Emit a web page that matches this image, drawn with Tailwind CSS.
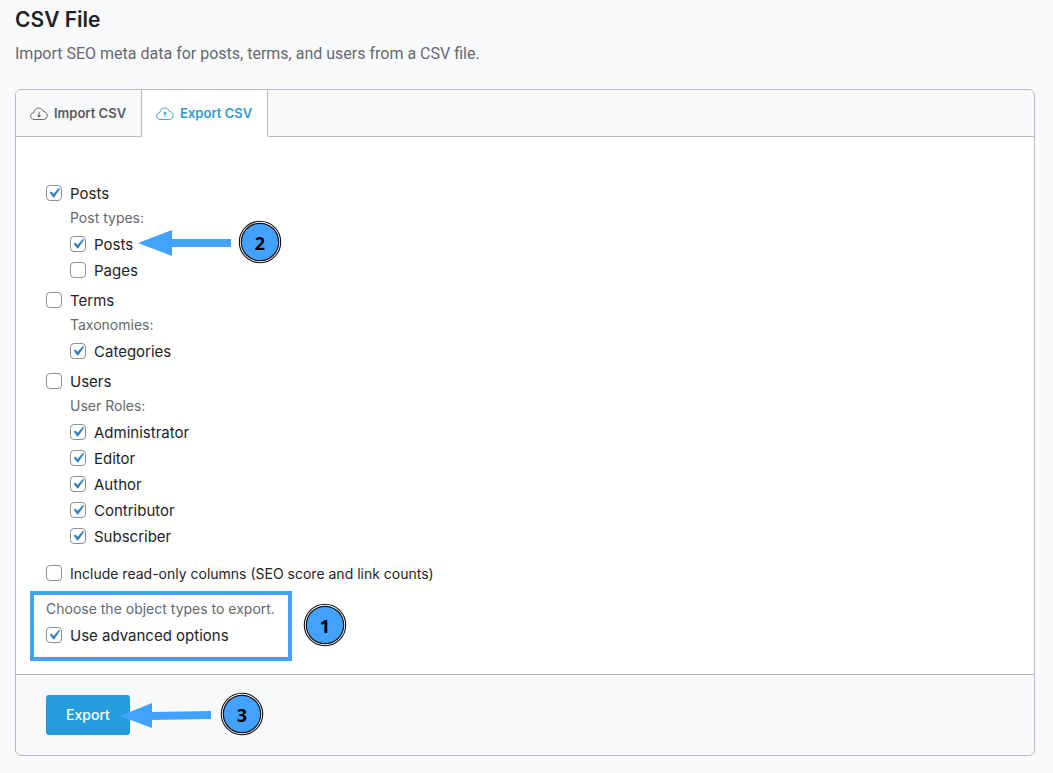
<!DOCTYPE html>
<html lang="en">
<head>
  <meta charset="UTF-8"/>
  <meta name="viewport" content="width=device-width, initial-scale=1.0"/>
  <title>CSV File</title>
  <script src="https://cdn.jsdelivr.net/npm/@tailwindcss/browser@4"></script>
</head>
<body class="min-h-screen bg-[#f9fafc] font-['Inter','Liberation_Sans',sans-serif] text-[#1d2327]">
  <!-- Shared shapes -->
  <svg class="hidden" aria-hidden="true">
    <symbol id="check" viewBox="2 2 16 16">
      <path fill="#3582c4" d="M14.83 4.89l1.34.94-5.81 8.38H9.02L5.78 9.67l1.34-1.25 2.57 2.4z"/>
    </symbol>
    <symbol id="cloud" viewBox="0 0 18 14">
      <path fill="none" stroke="currentColor" stroke-width=".9" d="M4.2 12.5C2 12.500.700 11 .700 9.100C.700 7.300 2 5.900 3.800 5.700C4.200 2.800 6.200 1 8.700 1C11 1 12.700 2.400 13.300 4.400C15.600 4.500 17.200 6.200 17.200 8.400C17.200 10.700 15.600 12.500 13.400 12.500Z"/>
    </symbol>
  </svg>

  <main class="pl-[15px] pr-[18px] pt-1 pb-4">
    <h1 class="text-[21px] leading-8 font-semibold">CSV File</h1>
    <p class="mt-1 font-['Roboto','Inter',sans-serif] text-base leading-7 text-[#646970]">Import SEO meta data for posts, terms, and users from a CSV file.</p>

    <div class="mt-[21px] rounded-md border border-[#b8babf] bg-white">
      <!-- Tabs -->
      <nav class="flex rounded-t-md bg-[#f8f9fa] text-[13px] font-semibold">
        <a href="#import" class="flex h-[47px] items-center gap-[6px] rounded-tl-md border-r border-b border-[#b8babf] px-[15px] pt-px text-[#595959]">
          <svg class="-ml-px h-[14px] w-[18px]"><use href="#cloud"/><path fill="none" stroke="currentColor" stroke-width=".9" d="M9 5v5"/><path fill="currentColor" d="M7 8.200h4L9 10.400z"/></svg>
          Import CSV
        </a>
        <a href="#export" class="flex h-[47px] items-center gap-[6px] border-r border-b border-r-[#b8babf] border-b-white bg-white px-[15px] pt-px text-[#2f9bce]">
          <svg class="-ml-px h-[14px] w-[18px]"><use href="#cloud"/><path fill="none" stroke="currentColor" stroke-width=".9" d="M9 10V5"/><path fill="currentColor" d="M7 6.800h4L9 4.600z"/></svg>
          Export CSV
        </a>
        <div class="flex-1 border-b border-[#b8babf]"></div>
      </nav>

      <form>
        <div class="px-[14px] pt-11 pb-[13px] text-[15px]">
          <div class="flex flex-col gap-1 px-4">
            <!-- Posts -->
            <div>
              <label class="flex h-[26px] items-center gap-2">
                <span class="-mt-[2px] grid size-4"><input type="checkbox" checked class="peer col-start-1 row-start-1 size-4 appearance-none rounded border border-[#8c8f94] bg-white"/><svg class="pointer-events-none invisible col-start-1 row-start-1 size-4 peer-checked:visible"><use href="#check"/></svg></span>
                Posts
              </label>
              <div class="pl-6">
                <p class="pb-1 text-sm leading-[21px] text-[#646970]">Post types:</p>
                <div class="relative">
                  <label class="flex h-[26px] items-center gap-2">
                    <span class="-mt-[2px] grid size-4"><input type="checkbox" checked class="peer col-start-1 row-start-1 size-4 appearance-none rounded border border-[#8c8f94] bg-white"/><svg class="pointer-events-none invisible col-start-1 row-start-1 size-4 peer-checked:visible"><use href="#check"/></svg></span>
                    Posts
                  </label>
                  <svg class="absolute -top-[13px] left-[68px] h-12 w-[148px]" viewBox="0 0 148 48" aria-hidden="true">
                    <path fill="#43a2ff" d="M0 24L34 11v9h59v8H34v9z"/>
                    <circle cx="122" cy="23" r="20.700" fill="#fff" stroke="#111" stroke-width="1.100"/>
                    <circle cx="122" cy="23" r="18.700" fill="#43a2ff" stroke="#111" stroke-width="1.200"/>
                    <text x="122" y="31" text-anchor="middle" class="fill-black font-['Noto_Sans',sans-serif] text-lg font-bold">2</text>
                  </svg>
                </div>
                <label class="flex h-[26px] items-center gap-2">
                  <span class="-mt-[2px] grid size-4"><input type="checkbox" class="peer col-start-1 row-start-1 size-4 appearance-none rounded border border-[#8c8f94] bg-white"/><svg class="pointer-events-none invisible col-start-1 row-start-1 size-4 peer-checked:visible"><use href="#check"/></svg></span>
                  Pages
                </label>
              </div>
            </div>

            <!-- Terms -->
            <div>
              <label class="flex h-[26px] items-center gap-2">
                <span class="-mt-[2px] grid size-4"><input type="checkbox" class="peer col-start-1 row-start-1 size-4 appearance-none rounded border border-[#8c8f94] bg-white"/><svg class="pointer-events-none invisible col-start-1 row-start-1 size-4 peer-checked:visible"><use href="#check"/></svg></span>
                Terms
              </label>
              <div class="pl-6">
                <p class="pb-1 text-sm leading-[21px] text-[#646970]">Taxonomies:</p>
                <label class="flex h-[26px] items-center gap-2">
                  <span class="-mt-[2px] grid size-4"><input type="checkbox" checked class="peer col-start-1 row-start-1 size-4 appearance-none rounded border border-[#8c8f94] bg-white"/><svg class="pointer-events-none invisible col-start-1 row-start-1 size-4 peer-checked:visible"><use href="#check"/></svg></span>
                  Categories
                </label>
              </div>
            </div>

            <!-- Users -->
            <div>
              <label class="flex h-[26px] items-center gap-2">
                <span class="-mt-[2px] grid size-4"><input type="checkbox" class="peer col-start-1 row-start-1 size-4 appearance-none rounded border border-[#8c8f94] bg-white"/><svg class="pointer-events-none invisible col-start-1 row-start-1 size-4 peer-checked:visible"><use href="#check"/></svg></span>
                Users
              </label>
              <div class="pl-6">
                <p class="pb-1 text-sm leading-[21px] text-[#646970]">User Roles:</p>
                <label class="flex h-[26px] items-center gap-2">
                  <span class="-mt-[2px] grid size-4"><input type="checkbox" checked class="peer col-start-1 row-start-1 size-4 appearance-none rounded border border-[#8c8f94] bg-white"/><svg class="pointer-events-none invisible col-start-1 row-start-1 size-4 peer-checked:visible"><use href="#check"/></svg></span>
                  Administrator
                </label>
                <label class="flex h-[26px] items-center gap-2">
                  <span class="-mt-[2px] grid size-4"><input type="checkbox" checked class="peer col-start-1 row-start-1 size-4 appearance-none rounded border border-[#8c8f94] bg-white"/><svg class="pointer-events-none invisible col-start-1 row-start-1 size-4 peer-checked:visible"><use href="#check"/></svg></span>
                  Editor
                </label>
                <label class="flex h-[26px] items-center gap-2">
                  <span class="-mt-[2px] grid size-4"><input type="checkbox" checked class="peer col-start-1 row-start-1 size-4 appearance-none rounded border border-[#8c8f94] bg-white"/><svg class="pointer-events-none invisible col-start-1 row-start-1 size-4 peer-checked:visible"><use href="#check"/></svg></span>
                  Author
                </label>
                <label class="flex h-[26px] items-center gap-2">
                  <span class="-mt-[2px] grid size-4"><input type="checkbox" checked class="peer col-start-1 row-start-1 size-4 appearance-none rounded border border-[#8c8f94] bg-white"/><svg class="pointer-events-none invisible col-start-1 row-start-1 size-4 peer-checked:visible"><use href="#check"/></svg></span>
                  Contributor
                </label>
                <label class="flex h-[26px] items-center gap-2">
                  <span class="-mt-[2px] grid size-4"><input type="checkbox" checked class="peer col-start-1 row-start-1 size-4 appearance-none rounded border border-[#8c8f94] bg-white"/><svg class="pointer-events-none invisible col-start-1 row-start-1 size-4 peer-checked:visible"><use href="#check"/></svg></span>
                  Subscriber
                </label>
              </div>
            </div>
          </div>

          <label class="mx-4 mt-[11px] flex h-[26px] items-center gap-2 text-sm">
            <span class="-mt-[2px] grid size-4"><input type="checkbox" class="peer col-start-1 row-start-1 size-4 appearance-none rounded border border-[#8c8f94] bg-white"/><svg class="pointer-events-none invisible col-start-1 row-start-1 size-4 peer-checked:visible"><use href="#check"/></svg></span>
            Include read-only columns (SEO score and link counts)
          </label>

          <!-- Highlighted option -->
          <div class="mt-1 flex items-center gap-3">
            <div class="w-[262px] border-4 border-[#43a2ff] px-3 pt-[3px] pb-2">
              <p class="pb-1 text-sm leading-[21px] text-[#646970]">Choose the object types to export.</p>
              <label class="flex h-[26px] items-center gap-2">
                <span class="-mt-[2px] grid size-4"><input type="checkbox" checked class="peer col-start-1 row-start-1 size-4 appearance-none rounded border border-[#8c8f94] bg-white"/><svg class="pointer-events-none invisible col-start-1 row-start-1 size-4 peer-checked:visible"><use href="#check"/></svg></span>
                Use advanced options
              </label>
            </div>
            <svg class="mb-[2px] size-[42px] overflow-visible" viewBox="0 0 42 42" aria-hidden="true">
              <circle cx="21" cy="21" r="20.700" fill="#fff" stroke="#111" stroke-width="1.100"/>
              <circle cx="21" cy="21" r="18.700" fill="#43a2ff" stroke="#111" stroke-width="1.200"/>
              <text x="21" y="29" text-anchor="middle" class="fill-black font-['Noto_Sans',sans-serif] text-lg font-bold">1</text>
            </svg>
          </div>
        </div>

        <!-- Footer -->
        <div class="rounded-b-md border-t border-[#b8babf] bg-[#f8f9fa] px-[30px] py-5">
          <div class="relative">
            <button type="button" class="h-10 w-21 rounded-[3px] bg-[#249ddd] text-sm font-medium text-white">Export</button>
            <svg class="absolute -top-1 left-[74px] h-12 w-[148px]" viewBox="0 0 148 48" aria-hidden="true">
              <path fill="#43a2ff" d="M0 25L32 12v9l59-1v8l-59 1v8z"/>
              <circle cx="122" cy="23" r="20.700" fill="#fff" stroke="#111" stroke-width="1.100"/>
              <circle cx="122" cy="23" r="18.700" fill="#43a2ff" stroke="#111" stroke-width="1.200"/>
              <text x="122" y="31" text-anchor="middle" class="fill-black font-['Noto_Sans',sans-serif] text-lg font-bold">3</text>
            </svg>
          </div>
        </div>
      </form>
    </div>
  </main>
</body>
</html>
